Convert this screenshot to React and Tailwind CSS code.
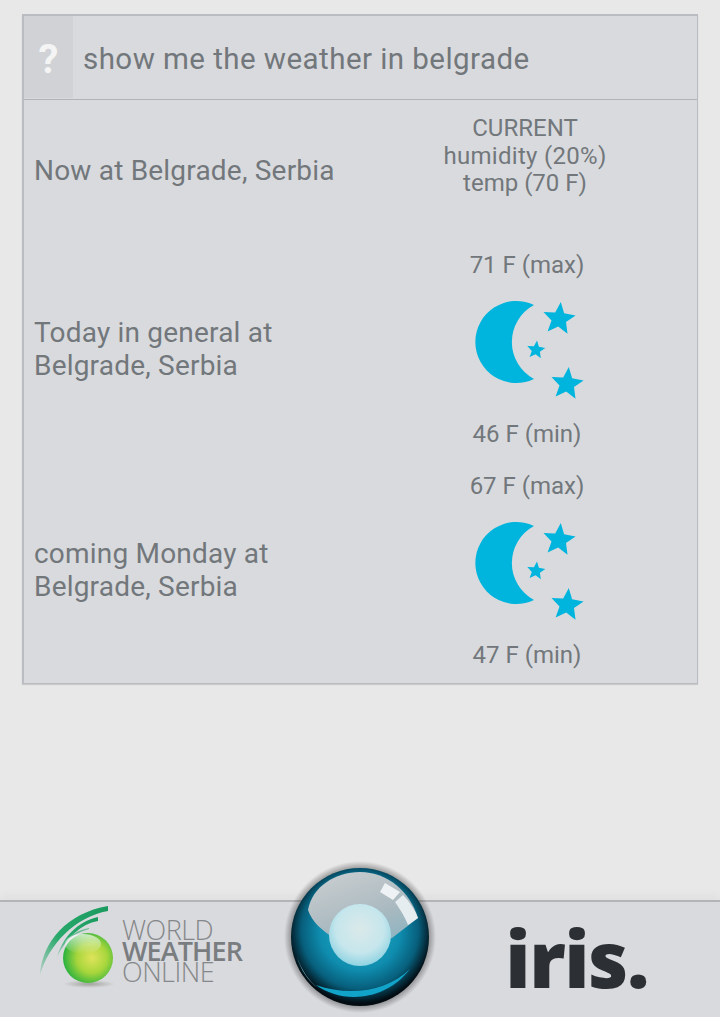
import React from "react";

const starPoints = (cx, cy, R, rot = 0) => {
  const pts = [];
  for (let i = 0; i < 10; i++) {
    const r = i % 2 === 0 ? R : R * 0.45;
    const a = (-90 + rot + i * 36) * (Math.PI / 180);
    pts.push(`${(cx + r * Math.cos(a)).toFixed(1)},${(cy + r * Math.sin(a)).toFixed(1)}`);
  }
  return pts.join(" ");
};

function MoonIcon() {
  return (
    <svg width="170" height="130" viewBox="0 0 170 130" className="block">
      <g fill="#00b5dd">
        <path d="M94 24 A41 41 0 1 0 94 98 A42 42 0 0 1 94 24 Z" />
        <polygon points={starPoints(119, 38, 17, 6)} />
        <polygon points={starPoints(127, 103, 17, 6)} />
        <polygon points={starPoints(96, 69, 9.5, 6)} />
      </g>
    </svg>
  );
}

function Globe() {
  return (
    <svg width="84" height="90" viewBox="0 0 84 90" className="block shrink-0">
      <defs>
        <radialGradient id="gl" cx="0.58" cy="0.5" r="0.6">
          <stop offset="0" stopColor="#dfe35a" />
          <stop offset="0.5" stopColor="#a8d63c" />
          <stop offset="1" stopColor="#1fae3e" />
        </radialGradient>
        <radialGradient id="gs" cx="0.5" cy="0.5" r="0.5">
          <stop offset="0" stopColor="#8a8a80" stopOpacity="0.7" />
          <stop offset="1" stopColor="#8a8a80" stopOpacity="0" />
        </radialGradient>
        <linearGradient id="sh" x1="0" y1="0" x2="0" y2="1">
          <stop offset="0" stopColor="#ffffff" stopOpacity="0.7" />
          <stop offset="1" stopColor="#ffffff" stopOpacity="0" />
        </linearGradient>
        <linearGradient id="arc" x1="1" y1="0" x2="0" y2="1">
          <stop offset="0" stopColor="#1b9a60" />
          <stop offset="0.6" stopColor="#2aa96c" />
          <stop offset="1" stopColor="#2aa96c" stopOpacity="0.2" />
        </linearGradient>
      </defs>
      <path d="M1 71 C3 38 28 9 69 2 L69 7 C36 13 10 40 1 71 Z" fill="url(#arc)" />
      <path d="M18 53 C24 33 38 18 59 13 L59 17 C42 20 28 33 18 53 Z" fill="url(#arc)" />
      <path d="M25 39 C30 32 38 26 50 24 L50 25 C40 28 32 32 25 39 Z" fill="#6dbf96" />
      <ellipse cx="50" cy="80" rx="26" ry="4" fill="url(#gs)" />
      <circle cx="49" cy="54" r="25" fill="url(#gl)" />
      <ellipse cx="44" cy="40" rx="18" ry="10" fill="url(#sh)" />
    </svg>
  );
}

function Orb() {
  return (
    <svg width="160" height="160" viewBox="0 0 160 160" className="block">
      <defs>
        <radialGradient id="halo" cx="0.5" cy="0.5" r="0.5">
          <stop offset="0.84" stopColor="#222" stopOpacity="0.45" />
          <stop offset="0.95" stopColor="#222" stopOpacity="0" />
        </radialGradient>
        <radialGradient id="base" cx="0.5" cy="0.45" r="0.53">
          <stop offset="0" stopColor="#22b4d2" />
          <stop offset="0.55" stopColor="#0f8cae" />
          <stop offset="0.8" stopColor="#075f7c" />
          <stop offset="0.95" stopColor="#04202c" />
          <stop offset="1" stopColor="#020c12" />
        </radialGradient>
        <linearGradient id="glass" x1="0.2" y1="0" x2="0.7" y2="1">
          <stop offset="0" stopColor="#c9cdcf" />
          <stop offset="0.6" stopColor="#a9b9c0" />
          <stop offset="1" stopColor="#88b3c2" />
        </linearGradient>
        <radialGradient id="core" cx="0.5" cy="0.4" r="0.6">
          <stop offset="0" stopColor="#dbe9ea" />
          <stop offset="0.65" stopColor="#c5e6ec" />
          <stop offset="1" stopColor="#8fd3e2" />
        </radialGradient>
      </defs>
      <circle cx="80" cy="80" r="80" fill="url(#halo)" />
      <circle cx="80" cy="80" r="69" fill="url(#base)" />
      <path d="M28 53 C32 30 55 15 80 15 C108 15 130 35 138 61 L112 81 L80 93 L52 80 C42 73 32 65 28 53 Z" fill="url(#glass)" />
      <circle cx="80" cy="78" r="31" fill="url(#core)" />
      <path d="M105 26 L120 35 L113 43 L100 35 Z" fill="#eef2f4" />
      <path d="M123 38 C130 45 135 53 138 61 L128 68 C125 60 120 52 115 45 Z" fill="#e6edf0" />
      <path d="M17 100 C22 114 29 124 38 131 C28 124 21 113 17 100 Z" fill="#8fd0de" />
      <path d="M36 128 C60 146 104 146 130 112 C108 134 70 140 36 128 Z" fill="#12a3c8" />
    </svg>
  );
}

const F = "font-['Roboto',sans-serif]";

export default function App() {
  return (
    <div className={`flex h-[1017px] w-[720px] flex-col overflow-hidden bg-[#e8e8e8] ${F}`}>
      <div className="mx-[22px] mt-[14px] border border-t-2 border-l-2 border-[#b9bdc2] bg-[#d9dade] text-[#72777b] shadow-[0_1px_1px_rgba(0,0,0,0.12)]">
        <div className="flex h-[84px] border-b border-[#b0b3b8]">
          <div className="flex h-[82px] w-[49px] items-center justify-center bg-[#d0d2d5] pt-[6px] text-[40px] font-bold text-[#f4f4f4]">?</div>
          <div className="flex items-center pl-[10px] pt-[4px] text-[29.5px] tracking-[0.45px]">show me the weather in belgrade</div>
        </div>

        <div className="flex h-[151px]">
          <div className="flex flex-1 items-center pb-[11px] pl-[10px] text-[28px] leading-[33px] tracking-[0.2px]">Now at Belgrade, Serbia</div>
          <div className="w-[344px] pt-[15px] text-center text-[24px] leading-[27.5px]">
            <div>CURRENT</div>
            <div className="tracking-[0.3px]">humidity (20%)</div>
            <div>temp (70 F)</div>
          </div>
        </div>

        <WeatherRow first="Today in general at" max="71 F (max)" min="46 F (min)" />
        <div className="h-[25px]" />
        <WeatherRow first="coming Monday at" max="67 F (max)" min="47 F (min)" />
        <div className="h-[15px]" />
      </div>

      <div className="relative mt-auto flex h-[117px] items-center justify-between border-t-2 border-[#b3b4b8] bg-[#d9dade] shadow-[0_-6px_8px_rgba(0,0,0,0.03)]">
        <div className="flex items-start self-start pl-[39px] pt-[2px]">
          <Globe />
          <div className="-ml-[1px] mt-[15px] font-['Open_Sans',sans-serif] text-[27px] leading-[21px] text-[#85888a]">
            <div className="font-light tracking-[-0.5px]">WORLD</div>
            <div className="font-semibold tracking-[-0.9px] text-[#7a7d80]">WEATHER</div>
            <div className="font-light tracking-[-0.5px]">ONLINE</div>
          </div>
        </div>
        <div className="mb-[4px] pr-[72px] font-['Open_Sans',sans-serif] text-[78px] font-extrabold leading-none tracking-[-1.5px] text-[#2c3034]">iris.</div>
        <div className="absolute left-[280px] top-[-45px]">
          <Orb />
        </div>
      </div>
    </div>
  );
}

function WeatherRow({ first, max, min }) {
  return (
    <div className="flex h-[196px]">
      <div className="flex flex-1 flex-col justify-center pl-[10px] text-[28px] leading-[33px] tracking-[0.2px]">
        <div>{first}</div>
        <div>Belgrade, Serbia</div>
      </div>
      <div className="flex w-[340px] flex-col items-center justify-between text-center text-[24px] leading-[28px]">
        <div>{max}</div>
        <div className="-my-[15px] -translate-x-[2px] -translate-y-[3px]"><MoonIcon /></div>
        <div className="translate-y-[1px]">{min}</div>
      </div>
    </div>
  );
}
